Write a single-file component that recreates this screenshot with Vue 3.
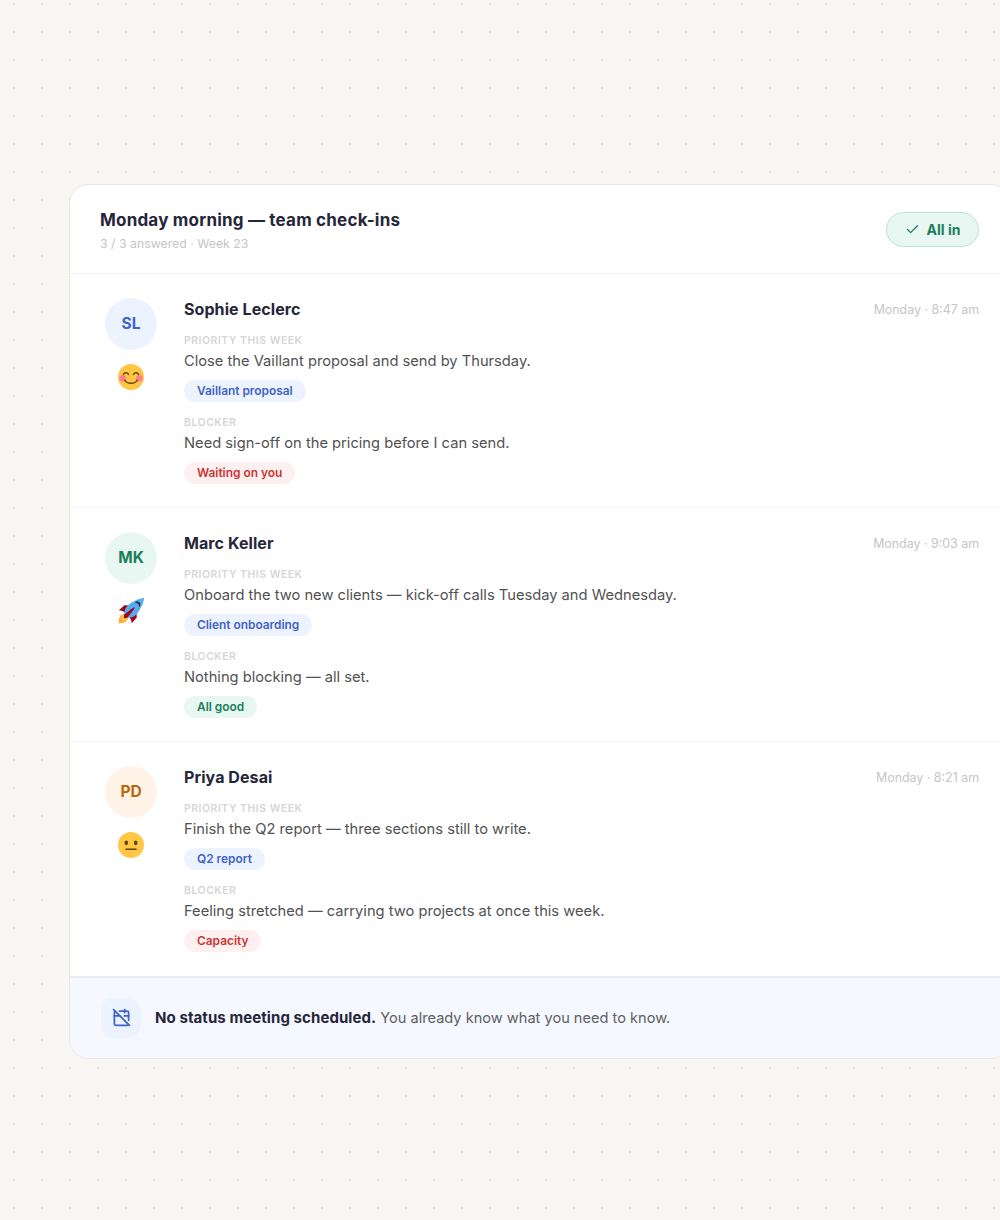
<template>
  <div class="page">
    <section class="card">
      <header class="card-head">
        <div>
          <h1>Monday morning — team check-ins</h1>
          <p class="sub">3 / 3 answered · Week 23</p>
        </div>
        <div class="all-in">
          <svg viewBox="0 0 24 24" width="15" height="15" fill="none" stroke="currentColor" stroke-width="2" stroke-linecap="round" stroke-linejoin="round">
            <path d="M20 6 9 17l-5-5" />
          </svg>
          <span>All in</span>
        </div>
      </header>

      <article v-for="person in people" :key="person.name" class="row">
        <div class="side">
          <div class="avatar" :class="person.tone">{{ person.initials }}</div>
          <svg class="mood" viewBox="0 0 36 36" width="26" height="26" role="img" :aria-label="person.mood">
            <template v-if="person.mood === 'happy'">
              <circle cx="18" cy="18" r="18" fill="#ffc745" />
              <circle cx="6.5" cy="20" r="4.6" fill="#ff7f96" />
              <circle cx="29.5" cy="20" r="4.6" fill="#ff7f96" />
              <g fill="none" stroke="#664500" stroke-width="2" stroke-linecap="round">
                <path d="M7.5 14.5c1.2-3.2 5.8-3.2 7 0" />
                <path d="M21.5 14.5c1.2-3.2 5.8-3.2 7 0" />
                <path d="M9.5 22.5c3 5.6 14 5.6 17 0" />
              </g>
            </template>
            <template v-else-if="person.mood === 'rocket'">
              <path fill="#a0041e" d="M1 17l8-7 16 1 1 16-7 8s.001-5.999-6-12-12-6-12-6z" />
              <path fill="#ffac33" d="M.973 35s-.036-7.979 2.985-11S15 21.187 15 21.187 14.999 29 11.999 32c-3 3-11.026 3-11.026 3z" />
              <circle fill="#ffcc4d" cx="8.999" cy="27" r="4" />
              <path fill="#55acee" d="M35.999 0s-10 0-22 10c-6 5-6 14-4 16s11 2 16-4c10-12 10-22 10-22z" />
              <path fill="#292f33" d="M26.999 5c-1.623 0-3.013.971-3.641 2.36.502-.227 1.055-.36 1.641-.36 2.209 0 4 1.791 4 4 0 .586-.133 1.139-.359 1.64 1.389-.627 2.359-2.017 2.359-3.64 0-2.209-1.791-4-4-4z" />
              <path fill="#a0041e" d="M8 28s0-4 1-5 13.001-10.999 14-10-9.001 13-10.001 14S8 28 8 28z" />
            </template>
            <template v-else>
              <circle cx="18" cy="18" r="18" fill="#ffc745" />
              <ellipse cx="11.5" cy="15" rx="2.5" ry="3.2" fill="#664500" />
              <ellipse cx="24.5" cy="15" rx="2.5" ry="3.2" fill="#664500" />
              <path d="M25 25H11a1 1 0 1 1 0-2h14a1 1 0 1 1 0 2z" fill="#664500" />
            </template>
          </svg>
        </div>
        <div class="body">
          <div class="top">
            <h2>{{ person.name }}</h2>
            <span class="time">{{ person.time }}</span>
          </div>
          <div class="label">Priority this week</div>
          <p class="text">{{ person.priority }}</p>
          <span class="tag blue">{{ person.priorityTag }}</span>
          <div class="label second">Blocker</div>
          <p class="text">{{ person.blocker }}</p>
          <span class="tag" :class="person.blockerTone">{{ person.blockerTag }}</span>
        </div>
      </article>

      <footer class="foot">
        <div class="foot-icon">
          <svg viewBox="0 0 24 24" width="19" height="19" fill="none" stroke="currentColor" stroke-width="2.2" stroke-linecap="round" stroke-linejoin="round">
            <path d="M4.2 4.2A2 2 0 0 0 3 6v14a2 2 0 0 0 2 2h14a2 2 0 0 0 1.82-1.18" />
            <path d="M21 15.5V6a2 2 0 0 0-2-2H9.5" />
            <path d="M16 2v4" />
            <path d="M3 10h7" />
            <path d="M21 10h-5.5" />
            <path d="m2 2 20 20" />
          </svg>
        </div>
        <p><strong>No status meeting scheduled.</strong> You already know what you need to know.</p>
      </footer>
    </section>
  </div>
</template>

<script setup>
const people = [
  {
    name: "Sophie Leclerc",
    initials: "SL",
    tone: "blue",
    mood: "happy",
    time: "Monday · 8:47 am",
    priority: "Close the Vaillant proposal and send by Thursday.",
    priorityTag: "Vaillant proposal",
    blocker: "Need sign-off on the pricing before I can send.",
    blockerTag: "Waiting on you",
    blockerTone: "red",
  },
  {
    name: "Marc Keller",
    initials: "MK",
    tone: "green",
    mood: "rocket",
    time: "Monday · 9:03 am",
    priority: "Onboard the two new clients — kick-off calls Tuesday and Wednesday.",
    priorityTag: "Client onboarding",
    blocker: "Nothing blocking — all set.",
    blockerTag: "All good",
    blockerTone: "green",
  },
  {
    name: "Priya Desai",
    initials: "PD",
    tone: "amber",
    mood: "neutral",
    time: "Monday · 8:21 am",
    priority: "Finish the Q2 report — three sections still to write.",
    priorityTag: "Q2 report",
    blocker: "Feeling stretched — carrying two projects at once this week.",
    blockerTag: "Capacity",
    blockerTone: "red",
  },
];
</script>

<style>
html,
body {
  margin: 0;
  overflow: hidden;
}
</style>

<style scoped>
.page {
  box-sizing: border-box;
  width: 1000px;
  height: 1220px;
  padding: 184px 0 0 69px;
  overflow: hidden;
  background-color: #f7f6f2;
  background-image: radial-gradient(circle, #e2dfd9 1px, transparent 1.2px);
  background-size: 28px 28px;
  background-position: 0 -10px;
  font-family: Inter, "Noto Sans", sans-serif;
}

.card {
  box-sizing: border-box;
  width: 941px;
  background: #fff;
  border: 1px solid #e8e7e3;
  border-radius: 20px;
  overflow: hidden;
}

.card-head {
  box-sizing: border-box;
  display: flex;
  align-items: center;
  justify-content: space-between;
  height: 89px;
  padding: 2px 30px 0;
  border-bottom: 1px solid #f1f0ed;
}

h1 {
  margin: -1px 0 0;
  font-size: 17px;
  line-height: 24px;
  font-weight: 700;
  letter-spacing: 0.2px;
  color: #26263a;
}

.sub {
  margin: 4px 0 0;
  font-size: 12.3px;
  line-height: 16px;
  color: #c6c6c6;
}

.all-in {
  box-sizing: border-box;
  display: flex;
  align-items: center;
  justify-content: center;
  gap: 7px;
  width: 93px;
  height: 35px;
  margin-top: -1px;
  background: #e8f7f1;
  border: 1px solid #b6e6d3;
  border-radius: 18px;
  color: #1a7f5a;
  font-size: 14px;
  font-weight: 700;
}

.row {
  display: flex;
  gap: 22px;
  padding: 24px 30px 23px;
  border-bottom: 1px solid #f6f5f3;
}

.row:last-of-type {
  padding-bottom: 24px;
  border-bottom: 0;
}

.side {
  display: flex;
  flex-direction: column;
  align-items: center;
  gap: 14px;
  width: 62px;
  flex-shrink: 0;
}

.avatar {
  display: flex;
  align-items: center;
  justify-content: center;
  box-sizing: border-box;
  width: 52px;
  height: 52px;
  padding-bottom: 1px;
  border-radius: 50%;
  font-size: 15.5px;
  font-weight: 700;
}

.avatar.blue {
  background: #edf3fe;
  color: #3f63c9;
}

.avatar.green {
  background: #e8f7f1;
  color: #1a7f5a;
}

.avatar.amber {
  background: #fef3e6;
  color: #b9690c;
}

.mood {
  display: block;
}

.body {
  flex: 1;
  min-width: 0;
}

.top {
  display: flex;
  align-items: center;
  justify-content: space-between;
  height: 22px;
  margin-bottom: 13px;
}

h2 {
  margin: 0;
  font-size: 16px;
  font-weight: 700;
  letter-spacing: 0.08px;
  color: #26263a;
}

.time {
  font-size: 12.4px;
  color: #c6c6c6;
}

.label {
  height: 14px;
  margin-bottom: 3px;
  font-size: 10.5px;
  line-height: 16px;
  font-weight: 600;
  letter-spacing: 0.5px;
  text-transform: uppercase;
  color: #d6d6d6;
}

.label.second {
  margin-top: 13px;
}

.text {
  margin: 0 0 8px;
  font-size: 14.7px;
  line-height: 22px;
  color: #525252;
}

.tag {
  display: block;
  width: fit-content;
  height: 22px;
  padding: 0 13px;
  border-radius: 11px;
  font-size: 11.9px;
  line-height: 22px;
  font-weight: 600;
}

.tag.blue {
  background: #edf3fe;
  color: #3f63c9;
}

.tag.red {
  background: #fef0f0;
  color: #c93434;
}

.tag.green {
  background: #e8f7f1;
  color: #1a7f5a;
}

.foot {
  box-sizing: border-box;
  display: flex;
  align-items: center;
  gap: 14px;
  height: 82px;
  padding: 0 31px 1px;
  background: #f5f8ff;
  border-top: 2px solid #e9eef8;
}

.foot-icon {
  display: flex;
  align-items: center;
  justify-content: center;
  width: 40px;
  height: 40px;
  border-radius: 12px;
  background: #edf3fe;
  color: #3f63c9;
}

.foot p {
  margin: 0;
  font-size: 14.6px;
  color: #606060;
}

.foot strong {
  font-size: 15px;
  letter-spacing: 0.08px;
  font-weight: 700;
  color: #26263a;
}
</style>
